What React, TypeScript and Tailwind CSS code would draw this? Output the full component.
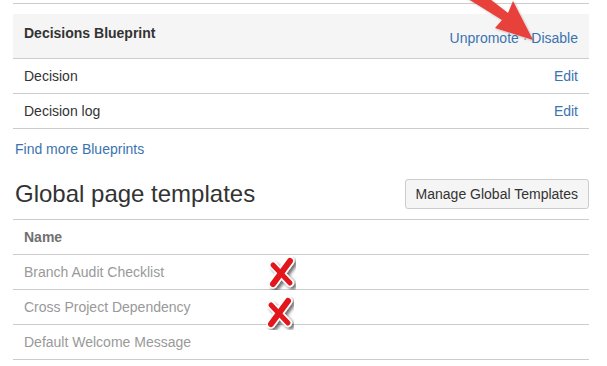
import React from "react";

const link = "text-[#3b73af]";

function RedX() {
  return (
    <svg width="34" height="34" viewBox="0 0 34 34" className="absolute">
      <defs>
        <filter id="xs" x="-30%" y="-30%" width="160%" height="160%">
          <feDropShadow dx="2.5" dy="2.5" stdDeviation="1.6" floodColor="#000" floodOpacity="0.55" />
        </filter>
      </defs>
      <g filter="url(#xs)" strokeLinecap="round">
        <path d="M7 9 L24 27" stroke="#fff" strokeWidth="8" />
        <path d="M24 5 L7 28" stroke="#fff" strokeWidth="9" />
        <path d="M7 9 L24 27" stroke="#e3141b" strokeWidth="5" />
        <path d="M24 5 L7 28" stroke="#e3141b" strokeWidth="6" />
      </g>
    </svg>
  );
}

const Row = ({ name, right }: { name: string; right?: string }) => (
  <div className="flex h-[35px] items-center justify-between border-b border-[#ccc] px-[11px]">
    <span>{name}</span>
    {right && <span className={link}>{right}</span>}
  </div>
);

export default function App() {
  return (
    <div
      className="relative h-[366px] w-[607px] overflow-hidden bg-white text-[14px] text-[#333]"
      style={{ fontFamily: '"Liberation Sans", Arial, sans-serif' }}
    >
      <div className="ml-[13px] w-[576px] pt-[3px]">
        <div className="border-t border-[#ccc]" />
        <div className="mt-[10px] flex h-[45px] justify-between border-b border-[#ccc] bg-[#f5f5f5] px-[11px]">
          <span className="pt-[9px] font-bold">Decisions Blueprint</span>
          <span className={`${link} pt-[14px]`}>
            Unpromote <span className="text-[#999]">·</span> Disable
          </span>
        </div>
        <Row name="Decision" right="Edit" />
        <Row name="Decision log" right="Edit" />
        <div className={`${link} ml-[2px] mt-[12px] leading-[17px]`}>Find more Blueprints</div>

        <div className="mt-[21px] flex items-center justify-between border-b border-[#ccc] pb-[10px]">
          <h1 className="ml-[2px] text-[24px] leading-[30px] text-[#333]">Global page templates</h1>
          <button className="h-[30px] rounded-[3px] border border-[#ccc] bg-[#f5f5f5] px-[10px] text-[14px] text-[#333]">
            Manage Global Templates
          </button>
        </div>
        <div className="flex h-[35px] items-center border-b border-[#ccc] px-[11px] font-bold text-[#707070]">Name</div>
        <div className="text-[#999]">
          <Row name="Branch Audit Checklist" />
          <Row name="Cross Project Dependency" />
          <Row name="Default Welcome Message" />
        </div>
      </div>

      <svg className="absolute left-0 top-0" width="607" height="60">
        <defs>
          <filter id="as" x="-20%" y="-20%" width="140%" height="140%">
            <feDropShadow dx="1" dy="1" stdDeviation="1" floodColor="#000" floodOpacity="0.25" />
          </filter>
        </defs>
        <polygon
          filter="url(#as)"
          fill="#e8403a"
          points="465,-3 477,-11 508,13 513,1 533,40 495,28 502,20"
        />
      </svg>

      <div className="absolute left-[266px] top-[256px]">
        <RedX />
      </div>
      <div className="absolute left-[264px] top-[296px]">
        <RedX />
      </div>
    </div>
  );
}
